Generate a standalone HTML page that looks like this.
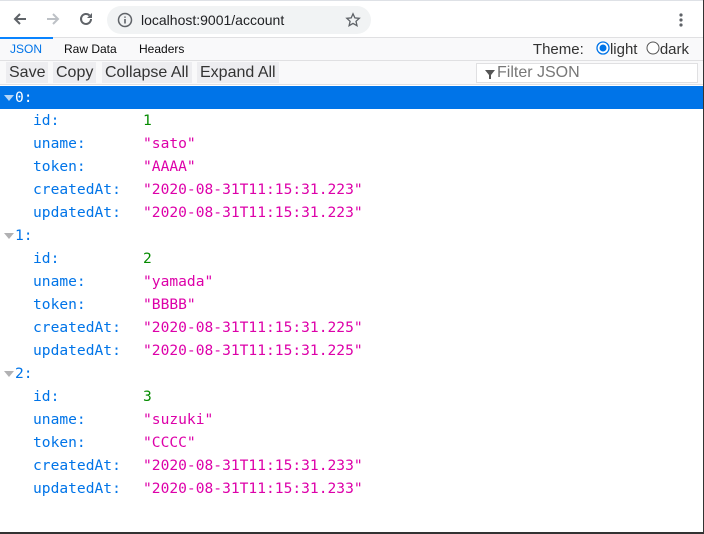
<!DOCTYPE html>
<html><head><meta charset="utf-8"><style>
*{margin:0;padding:0;box-sizing:border-box}
html,body{width:704px;height:534px;overflow:hidden;background:#fff;font-family:"Liberation Sans",Arial,sans-serif}
#frame{position:absolute;left:0;top:0;width:704px;height:534px;border-right:1px solid #333;border-bottom:2px solid #333}
#chrome{position:absolute;top:0;left:0;width:703px;height:37px;background:#fff;border-top:1px solid #dee1e6}
#omni{position:absolute;left:107px;top:5px;width:264px;height:28px;border-radius:14px;background:#f1f3f4}
#omni .url{position:absolute;left:34px;top:6px;font-size:14px;color:#202124}
#tabs{position:absolute;top:37px;left:0;width:703px;height:24px;background:#f9f9fa;border-top:1px solid #e0e0e2;border-bottom:1px solid #e0e0e2}
.tab{position:absolute;top:4px;font-size:12px;color:#0c0c0d}
#sel{position:absolute;left:0;top:-1px;width:53px;height:2px;background:#0a84ff}
#theme{position:absolute;right:14px;top:3px;font-size:15px;color:#333}
#tools{position:absolute;top:61px;left:0;width:703px;height:24px;background:#f9f9fa;border-bottom:1px solid #e0e0e2}
.btn{position:absolute;top:1px;height:21px;background:#ededf0;font-size:16px;color:#333;padding:1px 3px;line-height:19px}
#filter{position:absolute;left:476px;top:2px;width:222px;height:20px;background:#fff;border:1px solid #e0e0e2;font-size:16px;color:#777;line-height:18px;padding-left:20px}
#json{position:absolute;top:88px;left:0;width:703px;font-family:"DejaVu Sans Mono",monospace;font-size:14.6px}
.row{height:23px;line-height:23px;position:relative;white-space:pre}
.k{color:#0074e8;position:absolute;left:33px}
.v{position:absolute;left:143px}
.s{color:#dd00a9}.n{color:#058b00}
.h{position:absolute;left:15px;color:#0074e8}
.tri{position:absolute;left:4px;top:9px;width:0;height:0;border-left:5px solid transparent;border-right:5px solid transparent;border-top:6px solid #b1b1b3}
.selrow{background:#0074e8;margin-top:-2px;height:23px}.selrow .h{color:#fff}.selrow .tri{border-top-color:#fff;opacity:.7}
</style></head><body><div id="frame"></div>
<div id="chrome">
<svg style="position:absolute;left:12px;top:10px" width="16" height="16" viewBox="0 0 16 16"><path d="M14 8H3M8 3L3 8l5 5" stroke="#5f6368" stroke-width="2" fill="none"/></svg>
<svg style="position:absolute;left:45px;top:10px" width="16" height="16" viewBox="0 0 16 16"><path d="M2 8h11M8 3l5 5-5 5" stroke="#bdc1c6" stroke-width="2" fill="none"/></svg>
<svg style="position:absolute;left:78px;top:10px" width="16" height="16" viewBox="0 0 16 16"><path d="M13 8a5 5 0 1 1-1.5-3.6" stroke="#5f6368" stroke-width="2" fill="none"/><path d="M14 2v5H9z" fill="#5f6368"/></svg>
<div id="omni">
<svg style="position:absolute;left:10px;top:6px" width="16" height="16" viewBox="0 0 16 16"><circle cx="8" cy="8" r="6.5" stroke="#5f6368" stroke-width="1.5" fill="none"/><path d="M8 7v4.5M8 4.5v1.3" stroke="#5f6368" stroke-width="1.6"/></svg>
<span class="url">localhost:9001/account</span>
<svg style="position:absolute;left:238px;top:6px" width="16" height="16" viewBox="0 0 16 16"><path d="M8 1.8l1.9 4.1 4.4.4-3.3 3 1 4.4L8 11.4l-3.9 2.3 1-4.4-3.3-3 4.4-.4z" stroke="#5f6368" stroke-width="1.3" fill="none"/></svg>
</div>
<svg style="position:absolute;left:678px;top:12px" width="6" height="16"><circle cx="3" cy="2" r="1.6" fill="#5f6368"/><circle cx="3" cy="7" r="1.6" fill="#5f6368"/><circle cx="3" cy="12" r="1.6" fill="#5f6368"/></svg>
</div>
<div id="tabs"><div id="sel"></div>
<span class="tab" style="left:10px;color:#0074e8">JSON</span>
<span class="tab" style="left:64px">Raw Data</span>
<span class="tab" style="left:139px">Headers</span>
<div id="theme">Theme: <svg width="14" height="14" style="vertical-align:-1px;margin-left:8px"><circle cx="7" cy="7" r="6" stroke="#0074e8" stroke-width="1.3" fill="#fff"/><circle cx="7" cy="7" r="3.5" fill="#0074e8"/></svg>light&nbsp; <svg width="14" height="14" style="vertical-align:-1px"><circle cx="7" cy="7" r="6" stroke="#555" stroke-width="1" fill="#fff"/></svg>dark</div>
</div>
<div id="tools">
<span class="btn" style="left:6px">Save</span>
<span class="btn" style="left:53px">Copy</span>
<span class="btn" style="left:102px">Collapse All</span>
<span class="btn" style="left:197px">Expand All</span>
<div id="filter"><svg style="position:absolute;left:8px;top:6px" width="10" height="10" viewBox="0 0 10 10"><path d="M0 0h10L6 5v4H4V5z" fill="#555"/></svg>Filter JSON</div>
</div>
<div id="json">
<div class="row selrow"><span class="tri"></span><span class="h">0:</span></div>
<div class="row"><span class="k">id:</span><span class="v n">1</span></div>
<div class="row"><span class="k">uname:</span><span class="v s">"sato"</span></div>
<div class="row"><span class="k">token:</span><span class="v s">"AAAA"</span></div>
<div class="row"><span class="k">createdAt:</span><span class="v s">"2020-08-31T11:15:31.223"</span></div>
<div class="row"><span class="k">updatedAt:</span><span class="v s">"2020-08-31T11:15:31.223"</span></div>
<div class="row"><span class="tri"></span><span class="h">1:</span></div>
<div class="row"><span class="k">id:</span><span class="v n">2</span></div>
<div class="row"><span class="k">uname:</span><span class="v s">"yamada"</span></div>
<div class="row"><span class="k">token:</span><span class="v s">"BBBB"</span></div>
<div class="row"><span class="k">createdAt:</span><span class="v s">"2020-08-31T11:15:31.225"</span></div>
<div class="row"><span class="k">updatedAt:</span><span class="v s">"2020-08-31T11:15:31.225"</span></div>
<div class="row"><span class="tri"></span><span class="h">2:</span></div>
<div class="row"><span class="k">id:</span><span class="v n">3</span></div>
<div class="row"><span class="k">uname:</span><span class="v s">"suzuki"</span></div>
<div class="row"><span class="k">token:</span><span class="v s">"CCCC"</span></div>
<div class="row"><span class="k">createdAt:</span><span class="v s">"2020-08-31T11:15:31.233"</span></div>
<div class="row"><span class="k">updatedAt:</span><span class="v s">"2020-08-31T11:15:31.233"</span></div>
</div>
</body></html>
